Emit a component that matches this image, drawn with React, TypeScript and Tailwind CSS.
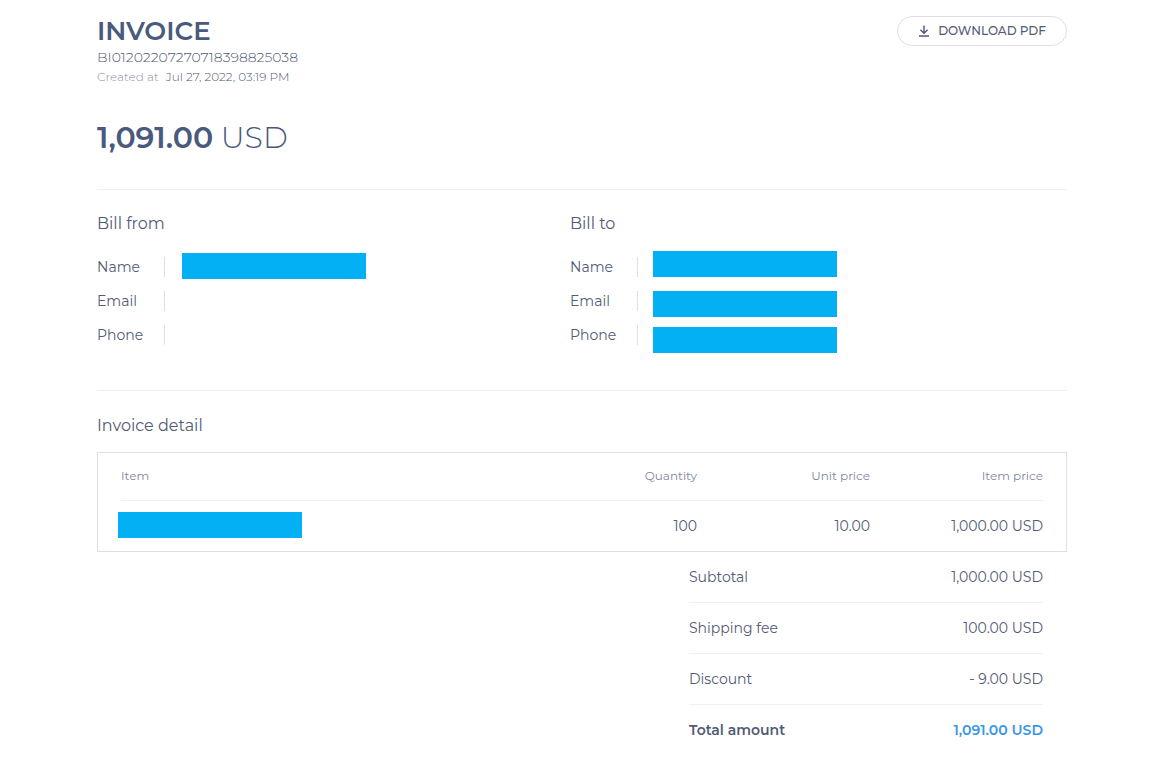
import React from 'react';

const billFrom = [
  { label: 'Name', mask: 'left-[17px] -top-1' },
  { label: 'Email', mask: '' },
  { label: 'Phone', mask: '' },
];

const billTo = [
  { label: 'Name', mask: 'left-[15px] -top-1.5' },
  { label: 'Email', mask: 'left-[15px] top-0' },
  { label: 'Phone', mask: 'left-[15px] top-0.5' },
];

const items = [{ id: 1, quantity: '100', unitPrice: '10.00', itemPrice: '1,000.00 USD' }];

const summary = [
  { label: 'Subtotal', value: '1,000.00 USD' },
  { label: 'Shipping fee', value: '100.00 USD' },
  { label: 'Discount', value: '- 9.00 USD' },
];

const DownloadIcon = () => (
  <svg width="12" height="12" viewBox="0 0 12 12" fill="none" stroke="currentColor" strokeWidth="1.4" aria-hidden="true">
    <path d="M6 0.5V8M2.4 4.8L6 8.2L9.6 4.8M1 11H11" />
  </svg>
);

// Solid block that hides private data
const Mask = ({ className }: { className: string }) => (
  <span className={`absolute h-[26px] w-[184px] bg-[#03b0f4] ${className}`} />
);

const Party = ({ title, rows }: { title: string; rows: { label: string; mask: string }[] }) => (
  <section>
    <h2 className="text-base leading-6">{title}</h2>
    <dl className="mt-[21px] flex flex-col gap-3.5">
      {rows.map((row) => (
        <div key={row.label} className="flex h-5 text-sm leading-5">
          <dt className="w-[67px]">{row.label}</dt>
          <dd className="relative flex-1 border-l border-[#dcdfe6]">
            {row.mask && <Mask className={row.mask} />}
          </dd>
        </div>
      ))}
    </dl>
  </section>
);

const App = () => (
  <main className="min-h-screen bg-white pt-4 pr-[93px] pb-4 pl-[97px] font-[Montserrat,Inter,sans-serif] text-[#525b75]">
    <header className="flex items-start justify-between">
      <div>
        <h1 className="text-[26px] leading-[30px] font-semibold text-[#495a7c]">INVOICE</h1>
        <p className="text-sm leading-[22px] font-light">BI01202207270718398825038</p>
        <p className="text-xs leading-[18px] font-light">
          <span className="mr-1 text-[#8a90a2]">Created at</span>{' '}
          Jul 27, 2022, 03:19 PM
        </p>
      </div>
      <button
        type="button"
        className="flex h-[30px] w-[170px] items-center justify-center gap-2 rounded-full border border-[#dcdfe6] text-xs font-medium"
      >
        <DownloadIcon />
        DOWNLOAD PDF
      </button>
    </header>

    <p className="mt-8 text-[30px] leading-10 font-light text-[#495a7c]">
      <span className="font-semibold">1,091.00</span> USD
    </p>

    <div className="mt-[31px] grid grid-cols-2 border-y border-[#f0f1f4] pt-[22px] pb-[45px]">
      <div className="pr-3">
        <Party title="Bill from" rows={billFrom} />
      </div>
      <div className="-ml-3">
        <Party title="Bill to" rows={billTo} />
      </div>
    </div>

    <h2 className="mt-[23px] text-base leading-6">Invoice detail</h2>
    <div className="mt-3.5 border border-[#dcdfe6] px-[23px]">
      <table className="w-full table-fixed">
        <thead>
          <tr className="h-[47px] border-b border-[#f0f1f4] text-xs text-[#8187a0]">
            <th className="text-left font-normal">Item</th>
            <th className="w-[173px] text-right font-normal">Quantity</th>
            <th className="w-[173px] text-right font-normal">Unit price</th>
            <th className="w-[173px] text-right font-normal">Item price</th>
          </tr>
        </thead>
        <tbody>
          {items.map((item) => (
            <tr key={item.id} className="h-[51px] text-sm">
              <td>
                <div className="relative h-7">
                  <Mask className="-left-[3px] top-0" />
                </div>
              </td>
              <td className="text-right">{item.quantity}</td>
              <td className="text-right">{item.unitPrice}</td>
              <td className="text-right">{item.itemPrice}</td>
            </tr>
          ))}
        </tbody>
      </table>
    </div>

    <dl className="mr-6 ml-auto w-[354px] text-sm leading-[50px]">
      {summary.map((row) => (
        <div key={row.label} className="flex justify-between border-b border-[#f0f1f4]">
          <dt>{row.label}</dt>
          <dd>{row.value}</dd>
        </div>
      ))}
      <div className="flex justify-between font-semibold">
        <dt>Total amount</dt>
        <dd className="text-[#3b96e3]">1,091.00 USD</dd>
      </div>
    </dl>
  </main>
);

export default App;
